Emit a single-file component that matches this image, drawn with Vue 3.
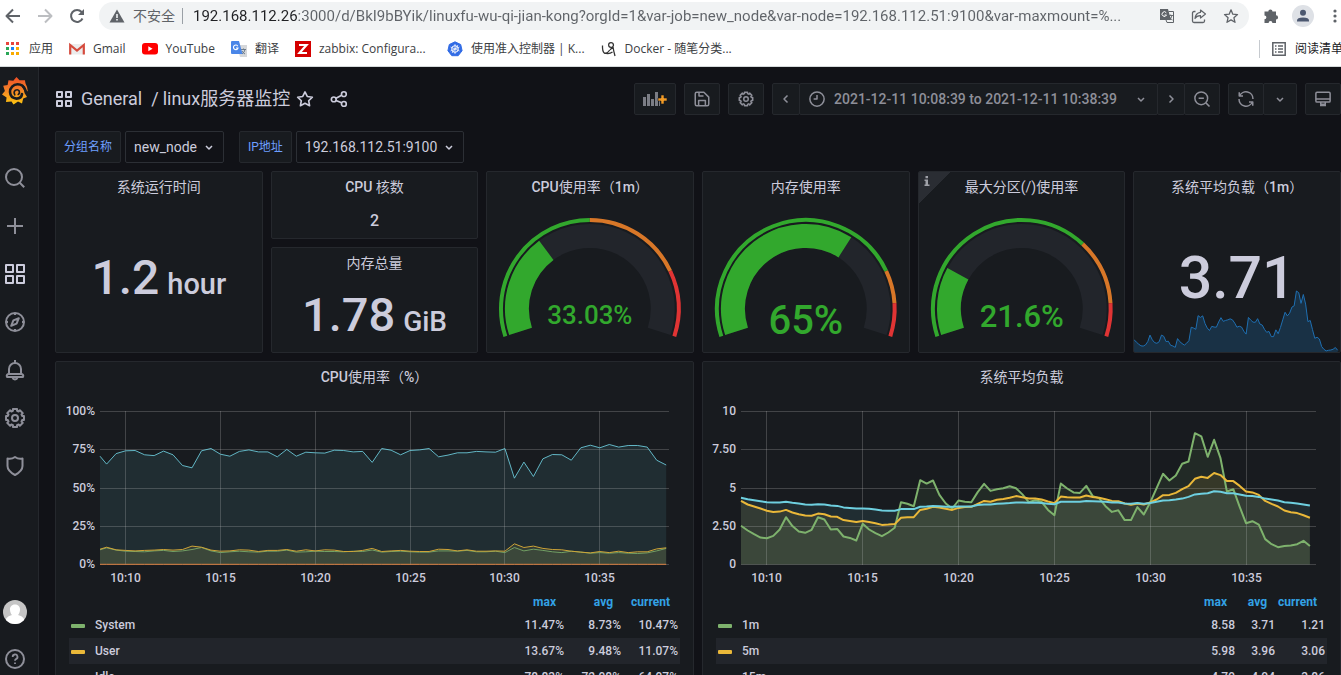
<script setup>
const navItems = [
  { name: 'Search', shapes: ['M11 3a8 8 0 1 0 0 16 8 8 0 0 0 0-16Z', 'm16.8 16.8 4.4 4.4'] },
  { name: 'Create', shapes: ['M12 4v16M4 12h16'] },
  { name: 'Dashboards', active: true, shapes: ['M3 3h7v7H3ZM14 3h7v7h-7ZM3 14h7v7H3ZM14 14h7v7h-7Z'] },
  { name: 'Explore', shapes: ['M12 3a9 9 0 1 0 0 18 9 9 0 0 0 0-18Z', 'M15.8 8.2l-2.2 5.4-5.4 2.2 2.2-5.4ZM12 3v2M12 19v2M3 12h2M19 12h2'] },
  { name: 'Alerting', shapes: ['M12 2v3M6 16v-5a6 6 0 0 1 12 0v5M6 16a2 2 0 0 0-2 3h16a2 2 0 0 0-2-3ZM9.5 19.5a2.6 2.6 0 0 0 5 0'] },
  { name: 'Configuration', shapes: [gear(12, 12, 9.2, 7.4), 'M12 9a3 3 0 1 0 0 6 3 3 0 0 0 0-6Z'] },
  { name: 'Server Admin', shapes: ['M4.5 4.5q4 1 7.500-1.500 3.500 2.500 7.500 1.500v7.500q0 5-7.500 9-7.500-4-7.500-9Z'] },
]

function gear(cx, cy, outer, inner) {
  const pts = []
  for (let i = 0; i < 8; i++) {
    const base = i * 45 - 90
    for (const [offset, r] of [[-13, outer], [13, outer], [16, inner], [29, inner]]) {
      const a = ((base + offset) * Math.PI) / 180
      pts.push(`${(cx + r * Math.cos(a)).toFixed(2)} ${(cy + r * Math.sin(a)).toFixed(2)}`)
    }
  }
  return `M${pts.join('L')}Z`
}

const gearSmall = gear(12, 12, 9.2, 7.4)

/* Latin runs of a title are set heavier than the Chinese ones. */
function titleParts(title) {
  return title
    .split(/([A-Za-z0-9%]+)/)
    .filter(Boolean)
    .map((text) => ({ text, tag: /^[A-Za-z0-9%]/.test(text) ? 'b' : 'span' }))
}

/* Gauges sweep 216 degrees, starting 18 degrees below the left horizontal. */
const GX = 103
const GY = 107
function polar(r, fraction) {
  const a = ((162 + 216 * fraction) * Math.PI) / 180
  return `${(GX + r * Math.cos(a)).toFixed(2)} ${(GY + r * Math.sin(a)).toFixed(2)}`
}
function arc(r, from, to) {
  const large = (to - from) * 216 > 180 ? 1 : 0
  return `M${polar(r, from)}A${r} ${r} 0 ${large} 1 ${polar(r, to)}`
}

const gauges = [
  { title: 'CPU使用率（1m）', value: 0.3303, text: '33.03%', size: 'g-small', base: 122, warn: 0.5, crit: 0.8 },
  { title: '内存使用率', value: 0.65, text: '65%', size: 'g-large', base: 132, warn: 0.8, crit: 0.9 },
  { title: '最大分区(/)使用率', value: 0.216, text: '21.6%', size: 'g-medium', base: 125, warn: 0.7, crit: 0.9, info: true },
]

const idle = [70.8, 65.6, 72.5, 74.3, 74.5, 71.7, 71.2, 74.1, 71.7, 64.7, 63.2, 74.3, 75.8, 72.1, 70.8, 73.9, 74.9, 73.6, 73.6, 70.4, 75.2, 70.8, 73.4, 73, 72.8, 74.7, 74.5, 73.6, 73.9, 66.7,
  75.8, 74.7, 71.7, 74.5, 74.9, 75.8, 70.4, 71.5, 73, 73, 73.9, 73.6, 73.4, 75.8, 56.4, 66.9, 57.5, 69.1, 71.9, 71.7, 68.2, 76.3, 78, 76.3, 78.4, 76.7, 77.8, 77.8, 76.7, 68.2, 65]
const system = [9.6, 10.9, 9.4, 8.7, 8.5, 8.3, 8.9, 9.2, 8.5, 8.9, 9.8, 11.1, 8.9, 7.8, 8.3, 8.7, 8.3, 8.1, 8.7, 8.7, 9.4, 8.1, 8.3, 8.7, 8.5, 8.5, 8.3, 8.7, 8.5, 9.5,
  8.1, 8.5, 8.7, 8.3, 8.1, 8.1, 8.9, 8.9, 8.7, 9.2, 8.3, 8.3, 8.7, 7.8, 11.1, 8.9, 10, 9.2, 8.3, 7.8, 8.7, 8.1, 7.4, 7.8, 7.4, 7.8, 7.4, 7.2, 7.6, 8.9, 10.5]
const user = [10, 11.3, 9.6, 9.2, 8.9, 9.2, 9.4, 9.8, 9.4, 9.8, 12, 11.3, 9.4, 8.7, 8.9, 9.6, 9.4, 8.5, 9.2, 9.2, 9.8, 8.7, 9.6, 8.9, 9.6, 9.4, 8.5, 8.5, 9.2, 10.5,
  8.5, 8.9, 9.2, 8.7, 8.5, 8.5, 10, 9.8, 8.9, 9.6, 8.7, 8.7, 8.9, 8.7, 13.5, 11.1, 12, 10.5, 9.8, 9.6, 8.7, 8.1, 7.6, 8.5, 7.8, 8.7, 7.8, 8.3, 8.3, 10.2, 10.9]
const iowait = idle.map(() => 0.1)

const load1 = [2.53, 2.22, 1.98, 1.76, 1.72, 1.87, 2.29, 3.09, 2.51, 2.16, 2.07, 2.27, 3.09, 2.94, 2.29, 2.33, 1.83, 1.74, 1.57, 2.66, 2.29, 2.05, 1.85, 2.09, 2.4, 4.07, 3.97, 3.81, 5.51, 5.29, 5.49, 4.55, 3.99, 3.66, 4.18, 4.1, 4.07, 4.73, 5.27, 4.81, 4.92, 4.99, 5.12, 4.99,
  4.58, 4.07, 4.2, 4.1, 3.57, 3.22, 5.29, 4.97, 4.71, 4.68, 5.14, 4.47, 4.34, 3.81, 3.44, 3.55, 2.9, 2.9, 3.75, 3.27, 4.05, 4.99, 5.93, 5.49, 5.82, 6.58, 6.73, 8.58, 8.37, 7.04, 8.15, 6.95, 4.77, 4.92, 3.77, 2.7, 2.83, 2.61, 1.66, 1.33, 1.13, 1.2, 1.24, 1.33, 1.55, 1.21]
const load5 = [4.16, 3.92, 3.79, 3.66, 3.51, 3.44, 3.46, 3.57, 3.4, 3.29, 3.2, 3.18, 3.33, 3.29, 3.14, 3.12, 2.9, 2.85, 2.77, 2.85, 2.77, 2.7, 2.59, 2.61, 2.64, 3.05, 3.09, 3.09, 3.57, 3.64, 3.77, 3.73, 3.64, 3.57, 3.7, 3.75, 3.77, 3.97, 4.16, 4.1, 4.23, 4.29, 4.36, 4.47,
  4.4, 4.31, 4.31, 4.25, 4.12, 4.01, 4.44, 4.4, 4.38, 4.38, 4.51, 4.42, 4.36, 4.27, 4.16, 4.14, 3.99, 3.9, 3.99, 3.92, 4.05, 4.25, 4.53, 4.55, 4.68, 4.92, 5.12, 5.6, 5.73, 5.66, 5.98, 5.84, 5.45, 5.45, 5.14, 4.77, 4.71, 4.55, 4.16, 3.97, 3.79, 3.53, 3.42, 3.36, 3.22, 3.06]
const load15 = [4.36, 4.27, 4.2, 4.14, 4.07, 4.05, 4.05, 4.1, 4.03, 3.99, 3.92, 3.9, 3.94, 3.92, 3.86, 3.83, 3.73, 3.7, 3.66, 3.66, 3.64, 3.59, 3.53, 3.51, 3.51, 3.62, 3.62, 3.62, 3.77, 3.79, 3.83, 3.81, 3.77, 3.77, 3.79, 3.79, 3.79, 3.88, 3.92, 3.92, 3.97, 3.99, 4.01, 4.05,
  4.05, 4.03, 4.05, 4.01, 3.97, 3.94, 4.1, 4.1, 4.1, 4.1, 4.16, 4.14, 4.12, 4.1, 4.05, 4.05, 3.99, 3.97, 4.01, 3.97, 4.01, 4.1, 4.18, 4.2, 4.25, 4.31, 4.42, 4.58, 4.62, 4.66, 4.79, 4.75, 4.66, 4.66, 4.58, 4.49, 4.47, 4.42, 4.31, 4.25, 4.18, 4.07, 4.03, 3.99, 3.92, 3.86]

const TOP = 19.5
const BOTTOM = 172.5
const RIGHT = 613
const START = 8.65

function buildChart({ title, kind, left, max, step, firstSample, ticks, series, lineWidth, legend }) {
  const perMinute = (RIGHT - left) / 30
  const xAt = (minute) => left + (minute - START) * perMinute
  const yAt = (v) => BOTTOM - (v / max) * (BOTTOM - TOP)
  return {
    title,
    kind,
    left,
    lineWidth,
    legend,
    yTicks: ticks.map((label, i) => ({ label, y: TOP + Math.round((i * (BOTTOM - TOP)) / 4) })),
    xTicks: [10, 15, 20, 25, 30, 35].map((m) => ({ label: `10:${m}`, x: Math.floor(xAt(m)) + 0.5 })),
    lines: series.map(({ color, values }) => {
      const pts = values.map((v, i) => {
        const minute = i === 0 ? START : firstSample + (i - 1) * step
        return `${xAt(minute).toFixed(1)} ${yAt(v).toFixed(1)}`
      })
      const lastX = pts[pts.length - 1].split(' ')[0]
      const line = `M${pts.join('L')}`
      return { color, line, area: `${line}L${lastX} ${BOTTOM}L${left} ${BOTTOM}Z` }
    }),
  }
}

const charts = [
  buildChart({
    title: 'CPU使用率（%）',
    kind: 'in-percent',
    left: 44,
    max: 100,
    step: 0.5,
    firstSample: 9,
    lineWidth: 1,
    ticks: ['100%', '75%', '50%', '25%', '0%'],
    series: [
      { color: '#7eb26d', values: system },
      { color: '#eab839', values: user },
      { color: '#6ed0e0', values: idle },
      { color: '#ef843c', values: iowait },
    ],
    legend: [
      { name: 'System', color: '#7eb26d', max: '11.47%', avg: '8.73%', current: '10.47%' },
      { name: 'User', color: '#eab839', max: '13.67%', avg: '9.48%', current: '11.07%' },
      { name: 'Idle', color: '#6ed0e0', max: '78.83%', avg: '72.98%', current: '64.97%' },
    ],
  }),
  buildChart({
    title: '系统平均负载',
    kind: 'in-units',
    left: 38,
    max: 10,
    step: 1 / 3,
    firstSample: 9,
    lineWidth: 2,
    ticks: ['10', '7.50', '5', '2.50', '0'],
    series: [
      { color: '#7eb26d', values: load1 },
      { color: '#eab839', values: load5 },
      { color: '#6ed0e0', values: load15 },
    ],
    legend: [
      { name: '1m', color: '#7eb26d', max: '8.58', avg: '3.71', current: '1.21' },
      { name: '5m', color: '#eab839', max: '5.98', avg: '3.96', current: '3.06' },
      { name: '15m', color: '#6ed0e0', max: '4.79', avg: '4.04', current: '3.86' },
    ],
  }),
]

const sparkPoints = load1
  .map((v, i) => `${((i / (load1.length - 1)) * 204).toFixed(1)} ${(61 - ((v - 1.13) / 7.45) * 60).toFixed(1)}`)
  .join('L')
const spark = `M${sparkPoints}`
const sparkArea = `M${sparkPoints}L204 62L0 62Z`

const url = '192.168.112.26:3000/d/BkI9bBYik/linuxfu-wu-qi-jian-kong?orgId=1&var-job=new_node&var-node=192.168.112.51:9100&var-maxmount=%...'
</script>

<template>
  <div class="window">
    <header class="browser">
      <div class="toolbar">
        <button class="nav-btn" aria-label="Back">
          <svg width="16" height="16" viewBox="0 0 16 16"><path d="M15 8H2M8 1.500 1.500 8 8 14.500" class="ln" stroke-width="2" /></svg>
        </button>
        <button class="nav-btn faded" aria-label="Forward">
          <svg width="16" height="16" viewBox="0 0 16 16"><path d="M1 8h13M8 1.500 14.500 8 8 14.500" class="ln" stroke-width="2" /></svg>
        </button>
        <button class="nav-btn" aria-label="Reload">
          <svg width="16" height="16" viewBox="0 0 16 16"><path d="M13.500 10.500A6 6 0 1 1 12.600 4L14 5.500" class="ln" stroke-width="2" /><path d="M15 1v6H9Z" fill="currentColor" /></svg>
        </button>
        <div class="omnibox">
          <svg width="16" height="16" viewBox="0 0 16 16"><path d="M8 1.500 15.500 14.500H.5Z" fill="#5f6368" /><path d="M7.200 6h1.600v4H7.200ZM7.200 11h1.600v1.600H7.200Z" fill="#f1f3f4" /></svg>
          <span class="insecure">不安全</span>
          <span class="sep"></span>
          <input class="url" type="text" aria-label="Address" :value="url" />
          <button aria-label="Translate">
            <svg width="16" height="16" viewBox="0 0 16 16"><path d="M1 1h8l3 11H1Z" fill="#5f6368" /><path d="M7.300 4.800A2.300 2.300 0 1 0 7.500 7H5.500" fill="none" stroke="#fff" /><path d="M9.500 3.500h5v11H8l-1-2.500" fill="none" stroke="#5f6368" /><path d="M9.500 7.500h4.500M11.700 6.500v1M13 7.500q-.5 3-3 4.500M10.500 9q1 2 3 3" fill="none" stroke="#5f6368" stroke-width=".9" /></svg>
          </button>
          <button aria-label="Share">
            <svg width="16" height="16" viewBox="0 0 16 16"><path d="M4.500 3.500H3A1.500 1.500 0 0 0 1.500 5v8A1.500 1.500 0 0 0 3 14.500h9a1.500 1.500 0 0 0 1.500-1.500v-1.500" class="ln" stroke-width="1.300" /><path d="M9.500 2 14.500 6l-5 4V7.700Q6 7.500 4 10.500 4.500 5 9.500 4.300Z" class="ln" stroke-width="1.200" /></svg>
          </button>
          <button aria-label="Bookmark this page">
            <svg width="16" height="16" viewBox="0 0 16 16"><path d="m8 1.800 1.800 4.400 4.700.4-3.600 3.100 1.100 4.600L8 11.900l-4 2.400 1.100-4.600L1.500 6.600l4.700-.4Z" class="ln" stroke-width="1.300" /></svg>
          </button>
        </div>
        <button class="ext" aria-label="Extensions">
          <svg width="16" height="16" viewBox="0 0 16 16"><path d="M1.500 3.500h3.800a2.100 2.100 0 1 1 4.200 0H13v3.800a2.100 2.100 0 1 1 0 4.200V15H9.400a1.900 1.900 0 0 0-3.800 0H1.500v-3.800a1.900 1.900 0 0 0 0-3.800Z" fill="#5f6368" /></svg>
        </button>
        <button class="profile" aria-label="Profile">
          <svg width="22" height="22" viewBox="0 0 22 22"><circle cx="11" cy="11" r="11" fill="#dee1e6" /><circle cx="11" cy="7.800" r="3" fill="#4c5870" /><path d="M5 16.500v-1q0-3 6-3t6 3v1Z" fill="#4c5870" /></svg>
        </button>
        <button class="more" aria-label="Menu">
          <svg width="4" height="16" viewBox="0 0 4 16" fill="#5f6368"><circle cx="2" cy="3" r="1.600" /><circle cx="2" cy="8" r="1.600" /><circle cx="2" cy="13" r="1.600" /></svg>
        </button>
      </div>
      <nav class="bookmarks" aria-label="Bookmarks">
        <a href="#">
          <svg width="16" height="16" viewBox="0 0 16 16"><path d="M1 1h3v3H1ZM6 1h3v3H6ZM11 1h3v3h-3Z" fill="#e8453c" /><path d="M1 6h3v3H1Z" fill="#2aa757" /><path d="M6 6h3v3H6Z" fill="#1a82f7" /><path d="M11 6h3v3h-3ZM11 11h3v3h-3ZM6 11h3v3H6Z" fill="#f9ab00" /><path d="M1 11h3v3H1Z" fill="#2aa757" /></svg>
          <span>应用</span>
        </a>
        <a href="#">
          <svg width="16" height="16" viewBox="0 0 16 16"><path d="M1 3h14v10.500H1Z" fill="#ececec" /><path d="M1.200 13.500V4L8 9.500 14.800 4v9.500" fill="none" stroke="#d54b3d" stroke-width="2.200" /></svg>
          <span>Gmail</span>
        </a>
        <a href="#">
          <svg width="16" height="16" viewBox="0 0 16 16"><rect y="2" width="16" height="11.500" rx="3" fill="#f00" /><path d="m6.300 5.200 4.300 2.500-4.300 2.500Z" fill="#fff" /></svg>
          <span>YouTube</span>
        </a>
        <a href="#">
          <svg width="16" height="16" viewBox="0 0 16 16"><path d="M6 4h10v12H9Z" fill="#d5d7da" /><path d="M10 8.500h5M12.500 7.500v1M14 8.500q-.5 3-3 4.500M11 10q1 2 3 3" stroke="#6b7a8a" fill="none" /><path d="M1 0h7l3.500 13H1a1 1 0 0 1-1-1V1a1 1 0 0 1 1-1Z" fill="#4a86e8" /><path d="M6.800 5.200A2.300 2.300 0 1 0 7 7H5" fill="none" stroke="#fff" stroke-width="1.100" /></svg>
          <span>翻译</span>
        </a>
        <a href="#" class="long">
          <svg width="16" height="16" viewBox="0 0 16 16"><path d="M0 0h16v16H0Z" fill="#d40000" /><path d="M4 4h7.500L4.500 12H12" fill="none" stroke="#fff" stroke-width="2.200" /></svg>
          <span>zabbix: Configura...</span>
        </a>
        <a href="#" class="long">
          <svg width="16" height="16" viewBox="0 0 16 16"><path d="m8 .8 5.700 2.700 1.400 6.200-3.900 5H4.800l-3.900-5 1.400-6.200Z" fill="#326ce5" stroke="#326ce5" stroke-linejoin="round" /><circle cx="8" cy="8" r="3.300" fill="none" stroke="#fff" /><path d="M8 3v10M3.500 6l9 4M12.500 6l-9 4M5 12l6-8" stroke="#fff" stroke-width=".7" /></svg>
          <span>使用准入控制器 | K...</span>
        </a>
        <a href="#">
          <svg width="16" height="16" viewBox="0 0 16 16"><path d="M1.500 4.500Q1.200 10.500 3.500 12.300q2.500.7 5.300-3.300M3 11.800q5 1.800 8.500-.8M12 6q.6 4 2 9M9 8.800l3-2.600M10 1.600a2.400 2.400 0 1 0 .1 4.800 2.400 2.400 0 0 0-.1-4.800" fill="none" stroke="#333" stroke-width="1.300" /></svg>
          <span>Docker - 随笔分类...</span>
        </a>
        <a href="#" class="reading">
          <svg width="16" height="16" viewBox="0 0 16 16"><path d="M1.800 1.800h12.400v12.400H1.800Z" fill="none" stroke="#5f6368" stroke-width="1.500" /><path d="M4 5h1.500M7 5h5M4 8h1.500M7 8h5M4 11h1.500M7 11h5" stroke="#5f6368" stroke-width="1.300" /></svg>
          <span>阅读清单</span>
        </a>
      </nav>
    </header>

    <div class="grafana">
      <aside class="sidebar">
        <a href="#" class="logo" aria-label="Grafana">
          <svg width="26" height="28" viewBox="0 0 26 28">
            <defs>
              <linearGradient id="flame" x1="0" y1="0" x2="0" y2="1">
                <stop offset="0" stop-color="#f04e25" />
                <stop offset=".45" stop-color="#f3802a" />
                <stop offset="1" stop-color="#fcc70f" />
              </linearGradient>
            </defs>
            <path d="M14.500 0 17.500 3.200Q20 3.400 23 3.200 23.200 5.500 23.600 6.700 25.500 9.500 25.800 14.500L24 13Q23 8.500 19.500 7L20 10Q22.500 12.500 22.500 16L25 20 21.200 21.500 20 26.500 16 24.600 11.500 27.600 9.500 24.500 4 25 4.600 20.500 0 17.500 2.900 14 1.200 8.800 5.600 8 6.500 3.200 11.300 3.800Z" fill="url(#flame)" />
            <path d="M23.500 13.500Q21.500 7.200 15.500 7.200A7.600 7.600 0 0 0 8 15Q8.300 21 14.500 21.600 19.500 21.500 20 17" fill="none" stroke="#181b1f" stroke-width="2.600" stroke-linecap="round" />
            <path d="M12.800 17.800q-1.600-2.800.6-4.600 2.600-1.200 3.800.8 .8 2.600-1 3.400" fill="none" stroke="#181b1f" stroke-width="1.600" stroke-linecap="round" />
          </svg>
        </a>
        <nav class="menu" aria-label="Main menu">
          <a v-for="item in navItems" :key="item.name" href="#" :class="{ active: item.active }" :aria-label="item.name">
            <svg width="24" height="24" viewBox="0 0 24 24"><path v-for="d in item.shapes" :key="d" :d="d" class="ln" stroke-width="2" /></svg>
          </a>
        </nav>
        <div class="side-bottom">
          <a href="#" aria-label="User">
            <svg width="24" height="24" viewBox="0 0 24 24"><defs><clipPath id="round"><circle cx="12" cy="12" r="12" /></clipPath></defs><g clip-path="url(#round)"><path d="M0 0h24v24H0Z" fill="#c5c5c5" /><path d="M12 4.500c3.500 0 5.300 2.500 5 5.500-.3 2.500-1 4-2 5 3 .8 5 2 6 4v5H3v-5c1-2 3-3.200 6-4-1-1-1.700-2.500-2-5-.3-3 1.500-5.500 5-5.500Z" fill="#fff" /></g></svg>
          </a>
          <a href="#" aria-label="Help">
            <svg width="24" height="24" viewBox="0 0 24 24" class="ln" stroke-width="2"><circle cx="12" cy="12" r="9" /><path d="M9.700 10a2.400 2.400 0 1 1 3.300 2.100q-1 .4-1 1.600M12 15.500v1.500" stroke-width="1.800" /></svg>
          </a>
        </div>
      </aside>

      <main class="main">
        <div class="dash-head">
          <h1>
            <svg width="18" height="18" viewBox="0 0 18 18" class="ln" stroke-width="2"><path d="M2 2h5v5H2ZM11 2h5v5h-5ZM2 11h5v5H2ZM11 11h5v5h-5Z" /></svg>
            <a href="#">General</a>
            <span>/</span>
            <a href="#">linux服务器监控</a>
          </h1>
          <button class="favorite" aria-label="Mark as favorite">
            <svg width="18" height="18" viewBox="0 0 24 24" class="ln" stroke-width="2.200"><path d="m12 2.500 3 6.100 6.800 1-4.900 4.700 1.200 6.700-6.100-3.200L5.900 21l1.200-6.700-4.900-4.700 6.800-1Z" /></svg>
          </button>
          <button class="share" aria-label="Share dashboard">
            <svg width="18" height="18" viewBox="0 0 24 24" class="ln" stroke-width="2.200"><circle cx="5" cy="12.500" r="3.200" /><circle cx="18.500" cy="5.500" r="3.200" /><circle cx="18.500" cy="18.500" r="3.200" /><path d="m8 11 7.500-4M8 14l7.500 3" /></svg>
          </button>

          <div class="tools">
            <button class="tool wide" aria-label="Add panel">
              <svg width="26" height="18" viewBox="0 0 26 18"><path d="M1 7h3v9H1ZM5 4h3v12H5ZM9 9h3v7H9ZM13 2h3v14h-3ZM17 11h1v5h-1Z" fill="#7b7d85" /><path d="M19 5h3v3h3v3h-3v3h-3v-3h-3V8h3Z" fill="#f29b26" stroke="#181b1f" stroke-width=".6" /></svg>
            </button>
            <button class="tool" aria-label="Save dashboard">
              <svg width="18" height="18" viewBox="0 0 24 24" class="ln" stroke-width="2"><path d="M5 3h9.500L21 9.500V19a2 2 0 0 1-2 2H5a2 2 0 0 1-2-2V5a2 2 0 0 1 2-2ZM8 3v5h6M7.500 21v-7h9v7" /></svg>
            </button>
            <button class="tool" aria-label="Dashboard settings">
              <svg width="18" height="18" viewBox="0 0 24 24" class="ln" stroke-width="2"><path :d="gearSmall" /><circle cx="12" cy="12" r="3" /></svg>
            </button>
            <div class="joined">
              <button class="tool narrow" aria-label="Previous time range">
                <svg width="16" height="16" viewBox="0 0 16 16" class="ln" stroke-width="1.500"><path d="m9.500 4.500-3.500 3.500 3.500 3.500" /></svg>
              </button>
              <button class="tool range">
                <svg width="18" height="18" viewBox="0 0 24 24" class="ln" stroke-width="2"><circle cx="12" cy="12" r="9.500" /><path d="M12 6.500V12H7.500" /></svg>
                <span>2021-12-11 10:08:39 to 2021-12-11 10:38:39</span>
                <svg width="16" height="16" viewBox="0 0 16 16" class="ln" stroke-width="1.500"><path d="m5 7 3 3 3-3" /></svg>
              </button>
              <button class="tool narrow" aria-label="Next time range">
                <svg width="16" height="16" viewBox="0 0 16 16" class="ln" stroke-width="1.500"><path d="m6.500 4.500 3.500 3.500-3.500 3.500" /></svg>
              </button>
              <button class="tool" aria-label="Zoom out">
                <svg width="18" height="18" viewBox="0 0 24 24" class="ln" stroke-width="2"><circle cx="11" cy="11" r="8.500" /><path d="m17.200 17.200 4.800 4.800M7.500 11h7" /></svg>
              </button>
            </div>
            <div class="joined">
              <button class="tool" aria-label="Refresh">
                <svg width="18" height="18" viewBox="0 0 24 24" class="ln" stroke-width="2"><path d="M3 3v5h5M3.500 8A9.300 9.300 0 0 1 21.300 12M21 21v-5h-5M20.500 16A9.300 9.300 0 0 1 2.700 12" /></svg>
              </button>
              <button class="tool medium" aria-label="Refresh interval">
                <svg width="16" height="16" viewBox="0 0 16 16" class="ln" stroke-width="1.500"><path d="m5 7 3 3 3-3" /></svg>
              </button>
            </div>
            <button class="tool" aria-label="Cycle view mode">
              <svg width="18" height="18" viewBox="0 0 24 24" class="ln" stroke-width="2"><path d="M4 3h16a1.500 1.500 0 0 1 1.500 1.500v10A1.500 1.500 0 0 1 20 16H4a1.500 1.500 0 0 1-1.500-1.500v-10A1.500 1.500 0 0 1 4 3ZM2.500 12h19M9 16v3h6v-3M8 20.500h8" /></svg>
            </button>
          </div>
        </div>

        <div class="variables">
          <div class="variable">
            <label for="var-job">分组名称</label>
            <div class="picker">
              <select id="var-job"><option>new_node</option></select>
              <svg width="16" height="16" viewBox="0 0 16 16" class="ln" stroke-width="1.500"><path d="m5 7 3 3 3-3" /></svg>
            </div>
          </div>
          <div class="variable">
            <label for="var-node">IP地址</label>
            <div class="picker">
              <select id="var-node"><option>192.168.112.51:9100</option></select>
              <svg width="16" height="16" viewBox="0 0 16 16" class="ln" stroke-width="1.500"><path d="m5 7 3 3 3-3" /></svg>
            </div>
          </div>
        </div>

        <div class="panels">
          <section class="panel">
            <h2>系统运行时间</h2>
            <p class="stat uptime"><span>1.2</span><small>hour</small></p>
          </section>

          <div class="stack">
            <section class="panel">
              <h2><b>CPU</b> 核数</h2>
              <p class="stat count">2</p>
            </section>
            <section class="panel">
              <h2>内存总量</h2>
              <p class="stat memory"><span>1.78</span><small>GiB</small></p>
            </section>
          </div>

          <section v-for="g in gauges" :key="g.title" class="panel">
            <span v-if="g.info" class="corner"><svg width="6" height="10" viewBox="0 0 6 10" fill="#9fa1a8"><path d="M1.500 0h2.500v2.200H1.500ZM.5 3.500H4V8.500h1.500V10H.5V8.500h1V5h-1Z" /></svg></span>
            <h2><component :is="p.tag" v-for="p in titleParts(g.title)" :key="p.text">{{ p.text }}</component></h2>
            <svg class="gauge" viewBox="0 0 206 150" fill="none">
              <path :d="arc(89, 0, g.warn)" stroke="#32a82d" stroke-width="4" />
              <path :d="arc(89, g.warn, g.crit)" stroke="#d87728" stroke-width="4" />
              <path :d="arc(89, g.crit, 1)" stroke="#e03434" stroke-width="4" />
              <path :d="arc(73, 0, 1)" stroke="#22252b" stroke-width="24" />
              <path :d="arc(73, 0, g.value)" stroke="#32a82d" stroke-width="24" />
              <text x="103" :y="g.base" text-anchor="middle" :class="g.size">{{ g.text }}</text>
            </svg>
          </section>

          <section class="panel">
            <h2>系统平均负载（<b>1m</b>）</h2>
            <p class="stat average">3.71</p>
            <svg class="spark" viewBox="0 0 206 62" fill="none">
              <path :d="sparkArea" fill="#1f78c1" fill-opacity=".24" />
              <path :d="spark" stroke="#1f6fb2" />
            </svg>
          </section>

          <section v-for="c in charts" :key="c.title" class="panel chart-panel">
            <h2><component :is="p.tag" v-for="p in titleParts(c.title)" :key="p.text">{{ p.text }}</component></h2>
            <svg class="chart" viewBox="0 0 637 199" fill="none">
              <path v-for="l in c.lines" :key="l.color" :d="l.area" :fill="l.color" fill-opacity=".1" />
              <g stroke="#c8c8c8" stroke-opacity=".24">
                <path v-for="t in c.yTicks" :key="t.label" :d="`M${c.left} ${t.y}H613`" />
                <path v-for="t in c.xTicks" :key="t.label" :d="`M${t.x} 19V173`" />
              </g>
              <g :class="c.kind" :stroke-width="c.lineWidth" stroke-linejoin="round">
                <path v-for="l in c.lines" :key="l.color" :d="l.line" :stroke="l.color" />
              </g>
              <text v-for="t in c.yTicks" :key="t.label" :x="c.left - 5" :y="t.y + 3" text-anchor="end">{{ t.label }}</text>
              <text v-for="t in c.xTicks" :key="t.label" :x="t.x" y="190" text-anchor="middle">{{ t.label }}</text>
            </svg>
            <table :class="['legend', c.kind]">
              <thead>
                <tr><th class="name"></th><th class="max">max</th><th class="avg">avg</th><th class="current">current</th></tr>
              </thead>
              <tbody>
                <tr v-for="row in c.legend" :key="row.name">
                  <td class="name"><svg width="14" height="4" viewBox="0 0 14 4"><rect width="14" height="4" rx="1" :fill="row.color" /></svg>{{ row.name }}</td>
                  <td>{{ row.max }}</td>
                  <td>{{ row.avg }}</td>
                  <td>{{ row.current }}</td>
                </tr>
              </tbody>
            </table>
          </section>
        </div>
      </main>
    </div>
  </div>
</template>

<style>
body {
  margin: 0;
  background: #111217;
}
</style>

<style scoped>
.window {
  display: flex;
  flex-direction: column;
  height: 100vh;
  overflow: hidden;
}
.window * {
  box-sizing: border-box;
}
svg {
  display: block;
  flex: none;
}
button {
  margin: 0;
  padding: 0;
  border: 0;
  background: none;
  color: inherit;
  font: inherit;
}
a {
  color: inherit;
  text-decoration: none;
}
.ln {
  fill: none;
  stroke: currentColor;
  stroke-linejoin: round;
}

.browser {
  flex: none;
  background: #fff;
  border-bottom: 1px solid #d5dadb;
  font-family: "Open Sans", "Noto Sans CJK SC", sans-serif;
  color: #5f6368;
}
.toolbar {
  display: flex;
  align-items: center;
  height: 32px;
  padding: 0 4px 0 5px;
}
.nav-btn {
  margin-right: 16px;
}
.nav-btn:nth-child(3) {
  margin-right: 14px;
}
.faded {
  color: #bcbec1;
}
.omnibox {
  display: flex;
  align-items: center;
  flex: 1;
  min-width: 0;
  height: 28px;
  padding: 0 10px;
  border-radius: 14px;
  background: #f1f3f4;
}
.omnibox button {
  margin-left: 16px;
}
.omnibox .url + button {
  margin-left: 8px;
}
.insecure {
  margin-left: 8px;
  font-size: 14px;
  line-height: 20px;
  white-space: nowrap;
}
.sep {
  width: 1px;
  height: 16px;
  margin: 0 10px 0 7px;
  background: #9aa0a6;
}
.url {
  flex: 1;
  min-width: 0;
  padding: 0;
  border: 0;
  outline: 0;
  font: 15px/20px Roboto, sans-serif;
  color: transparent;
  background: linear-gradient(90deg, #202124 105px, #5f6368 105px);
  background-clip: text;
  -webkit-background-clip: text;
}
.ext {
  margin-left: 14px;
}
.profile {
  margin-left: 13px;
}
.more {
  margin-left: 19px;
}
.bookmarks {
  display: flex;
  align-items: center;
  gap: 16px;
  height: 34px;
  padding-left: 5px;
  font-size: 12px;
  line-height: 18px;
  color: #3c4043;
  white-space: nowrap;
}
.bookmarks a {
  display: flex;
  align-items: center;
  gap: 8px;
}
.bookmarks .long {
  min-width: 136px;
}
.bookmarks .reading {
  margin: 0 -2px 0 auto;
  padding-left: 11px;
  border-left: 1px solid #c6cacf;
  color: #202124;
}

.grafana {
  display: flex;
  flex: 1;
  min-height: 0;
  background: #111217;
  color: #ccccdc;
  font-family: Roboto, "Noto Sans CJK SC", sans-serif;
  font-size: 14px;
}
.sidebar {
  display: flex;
  flex-direction: column;
  flex: none;
  width: 39px;
  padding: 10px 8px 4px 0;
  border-right: 1px solid #25282d;
  background: #181b1f;
  color: #8e8f99;
}
.sidebar a {
  display: flex;
  align-items: center;
  justify-content: center;
}
.logo {
  height: 28px;
  margin-bottom: 49px;
}
.menu a {
  height: 48px;
}
.menu .active {
  color: #ccccdc;
}
.side-bottom {
  display: grid;
  gap: 23px;
  margin-top: auto;
}
.main {
  flex: 1;
  min-width: 0;
  padding: 16px 0 0 16px;
}
.dash-head {
  display: flex;
  align-items: center;
  height: 32px;
}
h1 {
  display: flex;
  align-items: center;
  margin: 0;
  font-size: 18px;
  font-weight: 400;
  line-height: 24px;
  white-space: nowrap;
}
h1 svg {
  margin-right: 8px;
}
h1 span {
  margin: 0 4px 0 9px;
}
.favorite {
  margin-left: 6px;
}
.share {
  margin-left: 16px;
}
.tools {
  display: flex;
  gap: 8px;
  margin-left: auto;
}
.tool {
  display: flex;
  align-items: center;
  justify-content: center;
  width: 36px;
  height: 32px;
  border: 1px solid #25282d;
  border-radius: 2px;
  background: #181b1f;
  color: #8e8f99;
}
.wide {
  width: 42px;
}
.medium {
  width: 34px;
}
.narrow {
  width: 28px;
}
.range {
  width: auto;
  padding: 0 8px;
  font-weight: 500;
  white-space: nowrap;
}
.range span {
  margin: 0 16px 0 8px;
}
.joined {
  display: flex;
}
.joined .tool + .tool {
  margin-left: -1px;
}
.variables {
  display: flex;
  gap: 15px;
  margin: 16px 0 8px;
}
.variable {
  display: flex;
  gap: 4px;
}
.variable label {
  padding: 0 8px;
  border: 1px solid #25282d;
  border-radius: 2px;
  background: #181b1f;
  color: #6e9fff;
  font-size: 12px;
  line-height: 30px;
}
.picker {
  display: grid;
  align-items: center;
}
.picker select,
.picker svg {
  grid-area: 1 / 1;
}
.picker svg {
  justify-self: end;
  margin-right: 7px;
  pointer-events: none;
}
.picker select {
  height: 32px;
  padding: 0 25px 0 8px;
  border: 1px solid #2c2f35;
  border-radius: 2px;
  background: #111217;
  color: #ccccdc;
  font: inherit;
  appearance: none;
}
.panels {
  display: grid;
  grid-template-columns: repeat(6, minmax(0, 1fr));
  gap: 8px;
}
.panel {
  position: relative;
  display: flex;
  flex-direction: column;
  border: 1px solid #25282d;
  border-radius: 2px;
  background: #181b1f;
  overflow: hidden;
}
.panel h2 {
  margin: 0;
  font-size: 14px;
  font-weight: 400;
  line-height: 30px;
  text-align: center;
  white-space: nowrap;
}
.panel h2 b {
  font-weight: 500;
}
.stack {
  display: grid;
  grid-template-rows: 68px 106px;
  gap: 8px;
}
.stat {
  display: flex;
  align-items: baseline;
  justify-content: center;
  gap: 8px;
  margin: 0;
  font-weight: 500;
}
.uptime {
  padding-top: 48px;
  font-size: 48px;
  line-height: 56px;
}
.uptime small {
  font-size: 29px;
}
.count {
  padding-top: 7px;
  font-size: 16px;
  line-height: 24px;
}
.memory {
  padding-top: 9px;
  font-size: 47px;
  line-height: 56px;
}
.memory small {
  font-size: 28px;
}
.average {
  padding-top: 42px;
  font-size: 59px;
  line-height: 68px;
}
.gauge {
  width: 100%;
}
.gauge text {
  fill: #32a82d;
  font-weight: 500;
}
.g-small {
  font-size: 26px;
}
.g-medium {
  font-size: 31px;
}
.g-large {
  font-size: 40px;
}
.corner {
  position: absolute;
  top: 0;
  left: 0;
  width: 32px;
  height: 32px;
  padding: 4px 0 0 5px;
  background: linear-gradient(135deg, #2a2d33 50%, transparent 50%);
}
.spark {
  position: absolute;
  bottom: 0;
  left: 0;
  width: 100%;
}
.chart-panel {
  grid-column: span 3;
}
.chart {
  width: 100%;
}
.chart g.in-percent {
  opacity: 0.85;
}
.chart text {
  fill: #ccccdc;
  font-size: 12px;
  font-weight: 500;
}
.legend {
  margin: 0 13px;
  border-collapse: collapse;
  table-layout: fixed;
  font-size: 12px;
  font-weight: 500;
}
.legend th {
  height: 21px;
  padding: 0 10px 0 0;
  color: #33a2e5;
  font-weight: 700;
  text-align: right;
}
.legend td {
  height: 26px;
  padding: 0 2px 0 0;
  text-align: right;
}
.legend tbody tr:nth-child(even) {
  background: #22252b;
}
.legend .name {
  padding-left: 2px;
  text-align: left;
}
.legend .name svg {
  display: inline-block;
  margin-right: 10px;
  vertical-align: 1px;
}
.legend .max {
  width: 80px;
}
.in-percent .avg,
.in-percent .current {
  width: 57px;
}
.in-units .avg {
  width: 40px;
}
.in-units .current {
  width: 50px;
}
</style>
